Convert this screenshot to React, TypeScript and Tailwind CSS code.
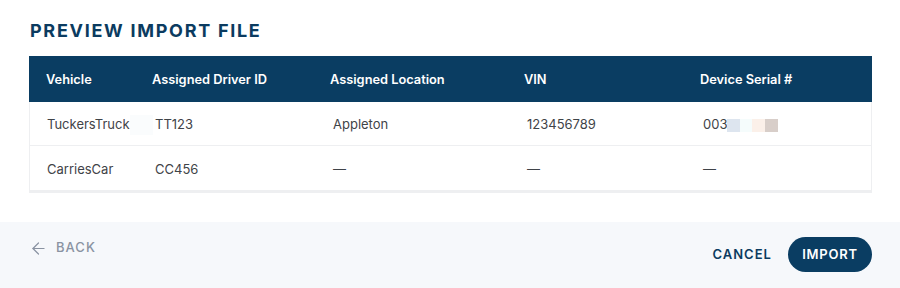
import { ArrowLeft } from "lucide-react";

type Row = {
  vehicle: string;
  driverId: string;
  location: string;
  vin: string;
  serial: string;
  masked?: boolean;
};

const rows: Row[] = [
  {
    vehicle: "TuckersTruck",
    driverId: "TT123",
    location: "Appleton",
    vin: "123456789",
    serial: "003",
    masked: true,
  },
  { vehicle: "CarriesCar", driverId: "CC456", location: "—", vin: "—", serial: "—" },
];

const cols = "grid grid-cols-[106px_178px_194px_176px_1fr]";

const App = () => {
  return (
    <div className="w-[900px] h-[288px] bg-white flex flex-col font-['Inter',sans-serif]">
      <div className="pl-[29px] pr-[28px] pt-[20px] h-[222px]">
        <h1 className="text-[18px] leading-[22px] font-bold tracking-[0.095em] text-[#0b3b60] ml-[1px]">
          PREVIEW IMPORT FILE
        </h1>

        <div className="mt-[14px] border-x border-b-[3px] border-[#eeeff1]">
          <div
            className={`${cols} h-[46px] items-center bg-[#0a3d62] text-white text-[12.8px] font-semibold px-[17px] pt-[2px] -mx-px`}
          >
            <div>Vehicle</div>
            <div>Assigned Driver ID</div>
            <div>Assigned Location</div>
            <div>VIN</div>
            <div>Device Serial #</div>
          </div>

          {rows.map((row, i) => (
            <div
              key={row.vehicle}
              className={`${cols} h-[44px] items-center px-[17px] pt-[3px] text-[13px] text-[#3f4348] ${
                i === 0 ? "border-b border-[#eeeff1]" : ""
              }`}
            >
              <div className="flex items-center">
                <span>{row.vehicle}</span>
                {row.masked && <span className="w-[24px] h-[20px] bg-[#fafcfd]" />}
              </div>
              <div className="pl-[2px]">{row.driverId}</div>
              <div className="pl-[2px]">{row.location}</div>
              <div className="pl-[2px]">{row.vin}</div>
              <div className="pl-[2px] flex items-center">
                <span>{row.serial}</span>
                {row.masked && (
                  <span className="flex h-[13px]">
                    <span className="w-[13px] bg-[#dde5ef]" />
                    <span className="w-[12px] bg-[#f5fcfc]" />
                    <span className="w-[13px] bg-[#fbf0e9]" />
                    <span className="w-[13px] bg-[#d8cec9]" />
                  </span>
                )}
              </div>
            </div>
          ))}
        </div>
      </div>

      <div className="flex-1 bg-[#f6f8fb] flex justify-between pl-[29px] pr-[28px]">
        <button className="flex items-center gap-[8px] h-[20px] mt-[16px] text-[#8a93a2] text-[13px] font-medium tracking-[0.08em]">
          <ArrowLeft size={19} strokeWidth={1.5} />
          BACK
        </button>
        <div className="flex items-center gap-[16px] mt-[15px] h-[35px]">
          <button className="text-[13px] font-semibold tracking-[0.08em] text-[#0b3b60]">
            CANCEL
          </button>
          <button className="h-[35px] w-[84px] rounded-full bg-[#0a3d62] text-white text-[13px] font-semibold tracking-[0.06em]">
            IMPORT
          </button>
        </div>
      </div>
    </div>
  );
};

export default App;
